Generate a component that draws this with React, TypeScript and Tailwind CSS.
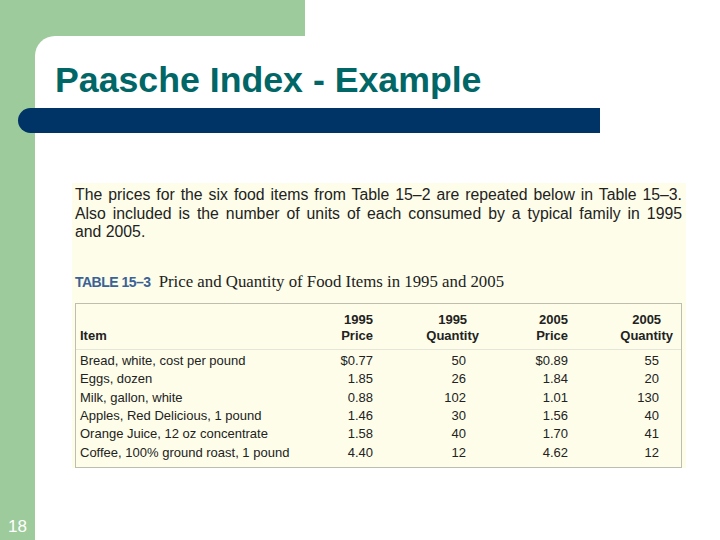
import React from "react";

const rows = [
  ["Bread, white, cost per pound", "$0.77", "50", "$0.89", "55"],
  ["Eggs, dozen", "1.85", "26", "1.84", "20"],
  ["Milk, gallon, white", "0.88", "102", "1.01", "130"],
  ["Apples, Red Delicious, 1 pound", "1.46", "30", "1.56", "40"],
  ["Orange Juice, 12 oz concentrate", "1.58", "40", "1.70", "41"],
  ["Coffee, 100% ground roast, 1 pound", "4.40", "12", "4.62", "12"],
];

const cols = "grid grid-cols-[225px_72px_106px_89px_105px]";

export default function App() {
  return (
    <div className="w-[720px] h-[540px] flex bg-white overflow-hidden font-['Liberation_Sans',Arial,sans-serif]">
      <div className="w-[35px] shrink-0 bg-[#9dcb9b] flex flex-col justify-end">
        <div className="text-white text-[17px] leading-[20px] pl-[8px] pb-[3px]">18</div>
      </div>
      <div className="flex-1 flex flex-col">
        <div className="h-[36px] w-[270px] bg-[#9dcb9b] shrink-0" />
        <div className="flex-1 bg-[linear-gradient(#9dcb9b,#9dcb9b)] bg-no-repeat bg-[length:24px_24px]">
          <div className="h-full bg-white rounded-tl-[20px] flex flex-col">
            <div className="mt-[24px] ml-[20px] text-[35.7px] leading-[40px] font-bold text-[#006666]">
              Paasche Index - Example
            </div>
            <div className="mt-[8px] -ml-[17px] w-[582px] h-[25px] bg-[#003366] rounded-l-full" />
            <div className="mt-[50px] ml-[37px] w-[614px] h-[285px] bg-[#fdfde9] flex flex-col pl-[3px] pr-[4px] pt-[3px]">
              <div className="text-[15.8px] leading-[18.5px] text-[#222]">
                <div className="text-justify [text-align-last:justify]">
                  The prices for the six food items from Table 15–2 are repeated below in Table 15–3.
                </div>
                <div className="text-justify [text-align-last:justify]">
                  Also included is the number of units of each consumed by a typical family in 1995
                </div>
                <div>and 2005.</div>
              </div>
              <div className="mt-[27px] flex items-baseline gap-[8px]">
                <span className="font-bold text-[14px] tracking-[-0.5px] text-[#3b6296]">
                  TABLE 15–3
                </span>
                <span className="font-['Liberation_Serif',serif] text-[16.8px] text-[#222]">
                  Price and Quantity of Food Items in 1995 and 2005
                </span>
              </div>
              <div className="mt-[9px] w-[607px] border border-[#bdbdb0] text-[13px] text-[#222] leading-[16px] pb-[5px]">
                <div className={`${cols} pt-[8px] pb-[5px] border-b border-[#e6e6d8] font-bold`}>
                  <div className="pl-[4px] self-end">Item</div>
                  <div className="text-right">1995<br />Price</div>
                  <div className="text-right">
                    <div className="inline-block text-center">1995<br />Quantity</div>
                  </div>
                  <div className="text-right">2005<br />Price</div>
                  <div className="text-right">
                    <div className="inline-block text-center">2005<br />Quantity</div>
                  </div>
                </div>
                <div className="pt-[2px]">
                  {rows.map((r) => (
                    <div key={r[0]} className={`${cols} leading-[18.4px]`}>
                      <div className="pl-[4px]">{r[0]}</div>
                      <div className="text-right">{r[1]}</div>
                      <div className="text-right pr-[13px]">{r[2]}</div>
                      <div className="text-right">{r[3]}</div>
                      <div className="text-right pr-[14px]">{r[4]}</div>
                    </div>
                  ))}
                </div>
              </div>
            </div>
          </div>
        </div>
      </div>
    </div>
  );
}
